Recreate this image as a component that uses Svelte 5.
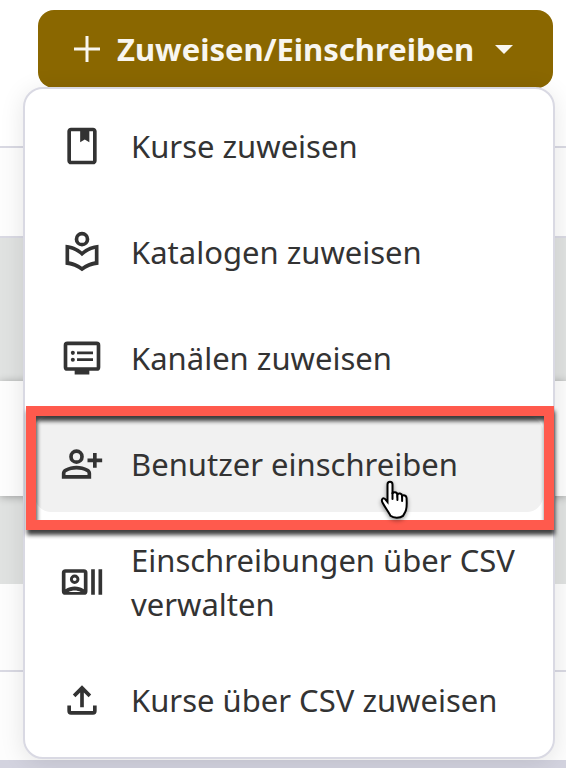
<script>
    // Entries of the dropdown, in display order
    const items = [
        { icon: "book", label: "Kurse zuweisen" },
        { icon: "library", label: "Katalogen zuweisen" },
        { icon: "channel", label: "Kanälen zuweisen" },
        { icon: "person", label: "Benutzer einschreiben" },
        { icon: "actors", label: "Einschreibungen über CSV verwalten" },
        { icon: "upload", label: "Kurse über CSV zuweisen" },
    ];

    let open = $state(true);
    let active = $state("person");
</script>

<main>
    <!-- Table rows behind the menu -->
    <div class="rows" aria-hidden="true">
        <div class="row head"></div>
        <div class="row filter"></div>
        <div class="row grey tall"></div>
        <div class="row card"></div>
        <div class="row grey"></div>
        <div class="row line"></div>
        <div class="row"></div>
        <div class="footer"></div>
    </div>

    <div class="dropdown">
        <button class="toggle" type="button" aria-expanded={open} onclick={() => (open = !open)}>
            <svg class="plus" viewBox="0 0 26 26" aria-hidden="true">
                <path d="M13 0v26M0 13h26" />
            </svg>
            <span>Zuweisen/Einschreiben</span>
            <svg class="caret" viewBox="0 0 18 9" aria-hidden="true">
                <path d="M0 0h18L9 9z" />
            </svg>
        </button>

        {#if open}
            <ul class="menu">
                {#each items as item}
                    <li>
                        <button
                            class="item"
                            class:active={active === item.icon}
                            type="button"
                            onclick={() => (active = item.icon)}
                        >
                            <svg class="icon" viewBox="0 0 24 24" aria-hidden="true">
                                {#if item.icon === "book"}
                                    <path fill-rule="evenodd" d="M18 2H6c-1.1 0-2 .9-2 2v16c0 1.1.9 2 2 2h12c1.1 0 2-.9 2-2V4c0-1.1-.9-2-2-2zM6 4h5v6l2.500-1.500L16 10V4h2v16H6z" />
                                {:else if item.icon === "library"}
                                    <path fill-rule="evenodd" d="M12 1a4 4 0 1 0 0 8 4 4 0 0 0 0-8zm0 2a2 2 0 1 1 0 4 2 2 0 0 1 0-4zM12 22.500c-1.300-1.030-2.710-1.850-4.220-2.450A17.100 17.100 0 0 0 3 18.970V8c1.680.13 3.290.53 4.810 1.190A16.200 16.200 0 0 1 12 11.750a16.200 16.200 0 0 1 4.190-2.560A15.200 15.200 0 0 1 21 8v10.970c-1.650.13-3.240.49-4.760 1.080A16.900 16.900 0 0 0 12 22.500zm0-2.500c1.080-.73 2.200-1.340 3.370-1.820A18.500 18.500 0 0 1 19 17.100v-6.750c-1.200.3-2.390.77-3.570 1.420-1.180.65-2.320 1.480-3.430 2.480a17.800 17.800 0 0 0-3.430-2.480A16 16 0 0 0 5 10.350v6.750c1.250.24 2.460.6 3.630 1.080 1.170.48 2.290 1.090 3.370 1.820z" />
                                {:else if item.icon === "channel"}
                                    <path fill-rule="evenodd" d="M4 3h16a2 2 0 0 1 2 2v12a2 2 0 0 1-2 2h-4v2H8v-2H4a2 2 0 0 1-2-2V5a2 2 0 0 1 2-2zm0 2v12h16V5z" />
                                    <circle cx="7" cy="9.200" r="1.100" />
                                    <circle cx="7" cy="12.900" r="1.100" />
                                    <path d="M9.300 8.400H18V10H9.300zM9.300 12.100H18v1.600H9.300z" />
                                {:else if item.icon === "person"}
                                    <path fill-rule="evenodd" d="M9 4a4 4 0 1 0 0 8 4 4 0 0 0 0-8zm0 2a2 2 0 1 1 0 4 2 2 0 0 1 0-4zM1 20v-2.800c0-.57.15-1.090.44-1.560.29-.47.68-.83 1.160-1.090C3.630 14.030 4.680 13.640 5.750 13.390 6.820 13.130 7.900 13 9 13s2.180.13 3.250.39c1.070.26 2.120.65 3.150 1.160.48.26.87.62 1.160 1.090.29.47.44.99.44 1.560V20zm2-2h12v-.8c0-.18-.05-.35-.14-.5a1 1 0 0 0-.36-.35c-.9-.45-1.810-.79-2.720-1.010A11.600 11.600 0 0 0 9 15c-.93 0-1.860.11-2.780.34-.92.22-1.830.56-2.720 1.010a1 1 0 0 0-.36.35.97.97 0 0 0-.14.5z" />
                                    <path d="M18 6h2v3h3v2h-3v3h-2v-3h-3V9h3z" />
                                {:else if item.icon === "actors"}
                                    <path fill-rule="evenodd" d="M3 5h10a2 2 0 0 1 2 2v10a2 2 0 0 1-2 2H3a2 2 0 0 1-2-2V7a2 2 0 0 1 2-2zm0 2v9c1.500-1 3.200-1.500 5-1.500s3.500.5 5 1.500V7zm1.700 10.400h6.600C10.300 16.900 9.200 16.600 8 16.600s-2.300.3-3.300.8zM8 7.900a2.600 2.600 0 1 1 0 5.200 2.600 2.600 0 0 1 0-5.200zm0 1.600a1 1 0 1 0 0 2 1 1 0 0 0 0-2z" />
                                    <path d="M17 5h2v14h-2zM21 5h2v14h-2z" />
                                {:else}
                                    <path d="M11 16V7.850l-2.600 2.600L7 9l5-5 5 5-1.400 1.450-2.600-2.600V16zM6 20a2 2 0 0 1-2-2v-3h2v3h12v-3h2v3a2 2 0 0 1-2 2z" />
                                {/if}
                            </svg>
                            <span>{item.label}</span>
                            {#if active === item.icon}
                                <span class="frame"></span>
                                <svg class="pointer" viewBox="0 0 32 40" aria-hidden="true">
                                    <path d="M9.500 22V4.500c0-3.600 5-3.600 5 0V14c0-2.500 4.700-2.300 4.900.5 1-1.800 4.500-1.200 4.700 1.300 1.300-1.200 4.400-.3 4.500 2.300 0 3.900.6 8-.6 11.900-.8 3-2.400 4.300-3 5.900-3 2.400-9.500 2.400-12.500-.1-1.700-3.700-5.600-8.600-7.900-13-1.900-3.300.6-6.200 3-3.200z" />
                                    <path d="M14.500 13v6M19.400 14.500V20M24.100 16v5" />
                                </svg>
                            {/if}
                        </button>
                    </li>
                {/each}
            </ul>
        {/if}
    </div>
</main>

<style>
    :global(body) {
        margin: 0;
        background: #fff;
    }

    main {
        position: relative;
        overflow: hidden;
        font-family: "Noto Sans", "Open Sans", sans-serif;
        color: #333;
    }

    .row {
        box-sizing: border-box;
        height: 88px;
        background: #fdfdfd;
    }

    .head {
        height: 148px;
        background: #fff;
        border-bottom: 2px solid #d9d9e3;
    }

    .filter {
        height: 90px;
        border-bottom: 2px solid #d9d9e3;
    }

    .grey {
        background: #e0e2e1;
    }

    .tall {
        height: 143px;
    }

    .card {
        position: relative;
        height: 115px;
        box-shadow: 0 1px 8px rgba(0, 0, 0, 0.3);
    }

    .line {
        border-bottom: 2px solid #d9d9e3;
    }

    .footer {
        height: 8px;
        background: #d3d3df;
    }

    .dropdown {
        position: absolute;
        top: 10px;
        left: 23px;
        right: 11px;
    }

    button {
        border: none;
        font-family: inherit;
        font-size: 31px;
        line-height: 44px;
        color: inherit;
        cursor: pointer;
    }

    .toggle {
        box-sizing: border-box;
        width: calc(100% - 17px);
        height: 78px;
        margin-left: 15px;
        padding: 0 40px 0 36px;
        display: flex;
        align-items: center;
        border-radius: 16px;
        background: #8a6700;
        color: #f8f6f0;
        font-weight: 700;
        white-space: nowrap;
    }

    .plus {
        flex: none;
        width: 26px;
        height: 26px;
        margin-right: 17px;
        stroke: currentColor;
        stroke-width: 3;
    }

    .caret {
        flex: none;
        width: 18px;
        height: 9px;
        margin-left: auto;
        fill: currentColor;
    }

    .menu {
        position: relative;
        display: flex;
        flex-direction: column;
        gap: 10px;
        margin: -1px 0 0;
        padding: 9px 10px;
        list-style: none;
        background: #fff;
        border: 2px solid #d9d9e3;
        border-radius: 20px;
        box-shadow: 0 4px 24px rgba(0, 0, 0, 0.1);
    }

    .item {
        position: relative;
        box-sizing: border-box;
        width: 100%;
        min-height: 96px;
        padding: 16px 20px 16px 25px;
        display: flex;
        align-items: center;
        gap: 27px;
        border-radius: 16px;
        background: none;
        text-align: left;
    }

    .active {
        background: #f1f1f1;
    }

    .icon {
        flex: none;
        width: 44px;
        height: 44px;
        fill: currentColor;
    }

    .frame {
        position: absolute;
        top: -10px;
        right: -11px;
        bottom: -18px;
        left: -9px;
        border: 10px solid #ff5a4d;
        filter: drop-shadow(1px 5px 2px rgba(0, 0, 0, 0.75));
    }

    .pointer {
        position: absolute;
        top: 64px;
        left: 343px;
        width: 32px;
        height: 40px;
        fill: #fff;
        stroke: #000;
        stroke-width: 2;
        stroke-linecap: round;
        filter: drop-shadow(0 2px 2px rgba(0, 0, 0, 0.4));
    }
</style>
